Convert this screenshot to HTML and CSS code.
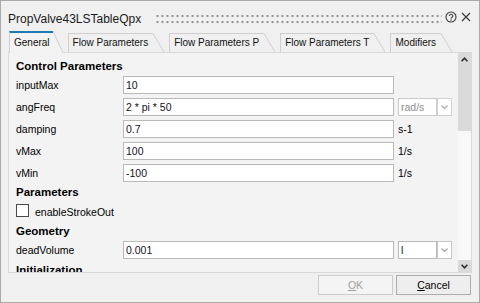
FILE: index.html
```html
<!DOCTYPE html>
<html>
<head>
	<meta charset="utf-8">
	<title>PropValve43LSTableQpx</title>
	<link rel="stylesheet" href="styles.css">
</head>
<body>
	<div class="window">
		<div class="titlebar">
			<span class="title">PropValve43LSTableQpx</span>
			<span class="grip"></span>
			<svg class="help" width="12" height="12" viewBox="0 0 12 12">
				<circle cx="6" cy="6" r="5" fill="none" stroke="#3a3a3a" stroke-width="1.1"/>
				<path d="M4.4 4.9a1.7 1.7 0 1 1 2.5 1.5c-0.6 0.3-0.9 0.6-0.9 1.3" fill="none" stroke="#3a3a3a" stroke-width="1.1"/>
				<circle cx="6" cy="9" r="0.7" fill="#3a3a3a"/>
			</svg>
			<svg class="close" width="10" height="10" viewBox="0 0 10 10">
				<path d="M1 1L9 9M9 1L1 9" stroke="#3a3a3a" stroke-width="1.2"/>
			</svg>
		</div>

		<div class="tabs">
			<div class="tab active">
				<span class="tab-label">General</span>
				<svg class="slant" width="10" height="22"><polygon points="0,0 10,22 0,22" fill="#f3f3f3"/><line x1="0" y1="0" x2="10" y2="22" stroke="#cfcfcf"/></svg>
			</div>
			<div class="tab">
				<span class="tab-label">Flow Parameters</span>
				<svg class="slant" width="11" height="19"><line x1="0" y1="0.5" x2="11" y2="19" stroke="#cfcfcf"/></svg>
			</div>
			<div class="tab">
				<span class="tab-label">Flow Parameters P</span>
				<svg class="slant" width="11" height="19"><line x1="0" y1="0.5" x2="11" y2="19" stroke="#cfcfcf"/></svg>
			</div>
			<div class="tab">
				<span class="tab-label">Flow Parameters T</span>
				<svg class="slant" width="11" height="19"><line x1="0" y1="0.5" x2="11" y2="19" stroke="#cfcfcf"/></svg>
			</div>
			<div class="tab">
				<span class="tab-label">Modifiers</span>
				<svg class="slant" width="11" height="19"><line x1="0" y1="0.5" x2="11" y2="19" stroke="#cfcfcf"/></svg>
			</div>
		</div>

		<div class="panel">
			<div class="form">
				<div class="group-title">Control Parameters</div>
				<div class="row">
					<span class="label">inputMax</span>
					<span class="field">10</span>
				</div>
				<div class="row">
					<span class="label">angFreq</span>
					<span class="field">2 * pi * 50</span>
					<span class="select disabled">
						<span class="select-value">rad/s</span>
						<span class="select-btn"><svg width="7" height="4"><polyline points="0.5,0.5 3.5,3.5 6.5,0.5" fill="none" stroke="#b0b0b0" stroke-width="1.3"/></svg></span>
					</span>
				</div>
				<div class="row">
					<span class="label">damping</span>
					<span class="field">0.7</span>
					<span class="unit">s-1</span>
				</div>
				<div class="row">
					<span class="label">vMax</span>
					<span class="field">100</span>
					<span class="unit">1/s</span>
				</div>
				<div class="row">
					<span class="label">vMin</span>
					<span class="field">-100</span>
					<span class="unit">1/s</span>
				</div>

				<div class="group-title">Parameters</div>
				<div class="check-row">
					<span class="checkbox"></span>
					<span>enableStrokeOut</span>
				</div>

				<div class="group-title">Geometry</div>
				<div class="row">
					<span class="label">deadVolume</span>
					<span class="field">0.001</span>
					<span class="select">
						<span class="select-value">l</span>
						<span class="select-btn"><svg width="7" height="4"><polyline points="0.5,0.5 3.5,3.5 6.5,0.5" fill="none" stroke="#a8a8a8" stroke-width="1.3"/></svg></span>
					</span>
				</div>

				<div class="group-title last">Initialization</div>
			</div>
			<div class="scrollbar">
				<div class="scroll-btn up"><svg width="7" height="5"><polyline points="0.6,4.2 3.5,1.2 6.4,4.2" fill="none" stroke="#2e2e2e" stroke-width="1.6"/></svg></div>
				<div class="scroll-thumb"></div>
				<div class="scroll-track"></div>
				<div class="scroll-btn down"><svg width="7" height="5"><polyline points="0.6,0.8 3.5,3.8 6.4,0.8" fill="none" stroke="#2e2e2e" stroke-width="1.6"/></svg></div>
			</div>
		</div>

		<div class="footer">
			<button class="btn" disabled><u>O</u>K</button>
			<button class="btn"><u>C</u>ancel</button>
		</div>
	</div>
</body>
</html>
```

FILE: styles.css
```css
* {
	margin: 0;
	padding: 0;
	box-sizing: border-box;
}
body {
	font-family: "Liberation Sans", Arial, sans-serif;
	font-size: 10.5px;
	color: #000;
	background: #f0f0f0;
}
.window {
	display: flex;
	flex-direction: column;
	width: 480px;
	height: 303px;
	border: 1px solid #a9a9a9;
	background: #f0f0f0;
}

/* title bar */
.titlebar {
	display: flex;
	align-items: flex-start;
	height: 30px;
	padding: 0 8px 0 7px;
}
.title {
	margin-top: 11px;
	font-size: 12px;
	line-height: 14px;
	color: #1a1a1a;
}
.grip {
	flex: 1;
	height: 12px;
	margin: 12px 3px 0 14px;
	background-image: radial-gradient(circle, #8e8e8e 0.9px, transparent 1.3px);
	background-size: 5px 6px;
}
.help {
	margin-top: 10px;
}
.close {
	margin: 11px 0 0 4px;
}

/* tabs */
.tabs {
	display: flex;
	align-items: flex-end;
	height: 22px;
	margin: 0 7px;
	padding-left: 1px;
	border-bottom: 1px solid #d9d9d9;
}
.tab {
	display: flex;
	height: 19px;
	margin-right: 5px;
}
.tab-label {
	padding: 0 5px 0 4px;
	border-left: 1px solid #cfcfcf;
	border-top: 1px solid #cfcfcf;
	font-size: 10px;
	line-height: 18px;
	color: #111;
}
.tab.active {
	height: 22px;
	margin-bottom: -1px;
	margin-right: 5px;
}
.tab.active .tab-label {
	padding-right: 3px;
	border-top: 2px solid #1e79b4;
	line-height: 20px;
	background: #f3f3f3;
}

/* panel */
.panel {
	display: flex;
	height: 220px;
	margin: 0 7px;
	border: 1px solid #d9d9d9;
	border-top: 0;
	background: #f3f3f3;
}
.form {
	flex: 1;
	overflow: hidden;
	padding: 5px 0 0 7px;
}
.group-title {
	font-size: 11.5px;
	font-weight: bold;
	line-height: 16px;
}
.group-title.last {
	margin-top: 1px;
}
.row {
	display: flex;
	align-items: center;
	height: 22px;
}
.label {
	width: 107px;
}
.field {
	width: 271px;
	height: 18px;
	padding: 0 2px;
	border: 1px solid #b9b9b9;
	background: #fff;
	line-height: 16px;
	color: #141428;
}
.unit {
	margin-left: 4px;
}
.select {
	display: flex;
	margin-left: 4px;
}
.select-value {
	width: 39px;
	height: 18px;
	padding: 0 2px;
	border: 1px solid #b9b9b9;
	background: #fff;
	line-height: 16px;
	color: #141428;
}
.select-btn {
	display: flex;
	align-items: center;
	justify-content: center;
	width: 15px;
	height: 18px;
	border: 1px solid #c6c6c6;
	background: #fff;
}
.select.disabled .select-value {
	border-color: #cccccc;
	color: #8f8f8f;
}
.select.disabled .select-btn {
	border-color: #d2d2d2;
}
.check-row {
	display: flex;
	align-items: center;
	height: 23px;
}
.checkbox {
	width: 13px;
	height: 13px;
	margin: -3px 6px 0 0;
	border: 1px solid #4a4a4a;
	background: #fff;
}

/* scrollbar */
.scrollbar {
	display: flex;
	flex-direction: column;
	width: 13px;
	background: #f8f8f8;
}
.scroll-btn {
	display: flex;
	align-items: center;
	justify-content: center;
	background: #dadada;
}
.scroll-btn.up {
	height: 13px;
}
.scroll-btn.down {
	height: 12px;
}
.scroll-thumb {
	height: 65px;
	background: #dadada;
}
.scroll-track {
	flex: 1;
}

/* footer */
.footer {
	display: flex;
	justify-content: flex-end;
	gap: 3px;
	padding: 2px 8px 0 0;
}
.btn {
	width: 75px;
	height: 20px;
	border: 1px solid #adadad;
	background: #eeeeee;
	font-family: "Liberation Sans", Arial, sans-serif;
	font-size: 10.5px;
	color: #000;
}
.btn:disabled {
	border-color: #cccccc;
	background: #f4f4f4;
	color: #a0a0a0;
}
```
